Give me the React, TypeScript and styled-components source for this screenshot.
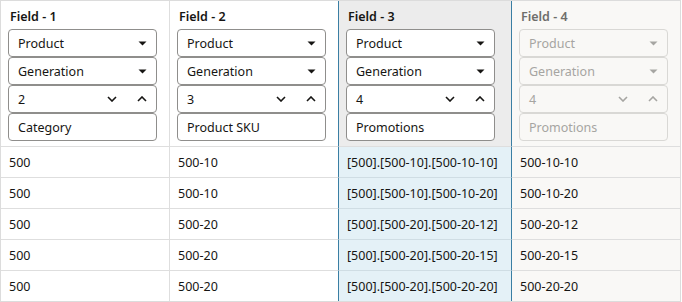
import styled, { createGlobalStyle } from "styled-components";

type Variant = "normal" | "selected" | "disabled";

interface ColumnValues {
    title: string
    hierarchy: string
    method: string
    depth: string
    name: string
    variant: Variant
    values: string[]
}

const columns: ColumnValues[] = [
    { title: "Field - 1", hierarchy: "Product", method: "Generation", depth: "2", name: "Category", variant: "normal", values: ["500", "500", "500", "500", "500"] },
    { title: "Field - 2", hierarchy: "Product", method: "Generation", depth: "3", name: "Product SKU", variant: "normal", values: ["500-10", "500-10", "500-20", "500-20", "500-20"] },
    { title: "Field - 3", hierarchy: "Product", method: "Generation", depth: "4", name: "Promotions", variant: "selected", values: ["[500].[500-10].[500-10-10]", "[500].[500-10].[500-10-20]", "[500].[500-20].[500-20-12]", "[500].[500-20].[500-20-15]", "[500].[500-20].[500-20-20]"] },
    { title: "Field - 4", hierarchy: "Product", method: "Generation", depth: "4", name: "Promotions", variant: "disabled", values: ["500-10-10", "500-10-20", "500-20-12", "500-20-15", "500-20-20"] },
]

const GlobalStyle = createGlobalStyle`
    html, body {
        margin: 0;
        padding: 0;
        background: #ffffff;
    }
    body {
        font-family: "Noto Sans", "Open Sans", sans-serif;
        color: #161513;
    }
`

function Caret() {
    return (
        <svg width="9" height="5" viewBox="0 0 9 5">
            <path d="M0.5 0.5 L8.5 0.5 L4.5 4.5 Z" fill="currentColor" />
        </svg>
    )
}

function Chevron({ up }: { up?: boolean }) {
    return (
        <svg width="10" height="6" viewBox="0 0 10 6">
            <path d={up ? "M1 5 L5 1 L9 5" : "M1 1 L5 5 L9 1"} fill="none" stroke="currentColor" strokeWidth="1.6" />
        </svg>
    )
}

export default function App() {
    return (
        <>
            <GlobalStyle />
            <Table>
                {columns.map((column, index) => (
                    <HeaderCell key={column.title} $variant={column.variant} $last={index === columns.length - 1} $blueRight={index === 1 || index === 2}>
                        <Title $variant={column.variant}>{column.title}</Title>
                        <Control $variant={column.variant}>
                            <span>{column.hierarchy}</span>
                            <Icons><Caret /></Icons>
                        </Control>
                        <Control $variant={column.variant}>
                            <span>{column.method}</span>
                            <Icons><Caret /></Icons>
                        </Control>
                        <Control $variant={column.variant}>
                            <span>{column.depth}</span>
                            <Icons>
                                <Chevron />
                                <Chevron up />
                            </Icons>
                        </Control>
                        <Control $variant={column.variant}>
                            <span>{column.name}</span>
                        </Control>
                    </HeaderCell>
                ))}
                {[0, 1, 2, 3, 4].map(row =>
                    columns.map((column, index) => (
                        <Cell
                            key={`${row}-${index}`}
                            $variant={column.variant}
                            $last={index === columns.length - 1}
                            $lastRow={row === 4}
                            $blueRight={index === 1 || index === 2}
                        >
                            {column.values[row]}
                        </Cell>
                    ))
                )}
            </Table>
        </>
    )
}

const Table = styled.div`
    width: 681px;
    box-sizing: border-box;
    border: 1px solid #dcdcdc;
    display: grid;
    grid-template-columns: 169px 169px 173px 168px;
    grid-template-rows: 146px repeat(4, 31px) 30px;
`

interface CellProps {
    $variant: Variant
    $last?: boolean
    $lastRow?: boolean
    $blueRight?: boolean
}

const HeaderCell = styled.div<CellProps>`
    box-sizing: border-box;
    padding: 6px 0 0 7px;
    display: flex;
    flex-direction: column;
    border-bottom: 1px solid #dedede;
    border-right: ${p => p.$last ? "none" : `1px solid ${p.$blueRight ? "#3a7ea3" : "#dedede"}`};
    background: ${p => p.$variant === "selected" ? "#ececec" : p.$variant === "disabled" ? "#f9f8f6" : "#ffffff"};
`

const Title = styled.div<{ $variant: Variant }>`
    height: 22px;
    line-height: 20px;
    padding-left: 2px;
    font-size: 12.5px;
    font-weight: 600;
    color: ${p => p.$variant === "disabled" ? "#6f6e6b" : "#161513"};
`

const Control = styled.div<{ $variant: Variant }>`
    box-sizing: border-box;
    width: 149px;
    height: 28px;
    padding: 0 9px 0 9px;
    border: 1px solid ${p => p.$variant === "disabled" ? "#d9d8d5" : "#8f8e8c"};
    border-radius: 4px;
    background: ${p => p.$variant === "disabled" ? "transparent" : "#ffffff"};
    display: flex;
    align-items: center;
    justify-content: space-between;
    font-size: 12.5px;
    color: ${p => p.$variant === "disabled" ? "#a6a5a2" : "#161513"};
`

const Icons = styled.div`
    display: flex;
    align-items: center;
    gap: 20px;
    & svg {
        display: block;
    }
`

const Cell = styled.div<CellProps>`
    box-sizing: border-box;
    padding-left: 8px;
    display: flex;
    align-items: center;
    font-size: 12.5px;
    border-bottom: ${p => p.$lastRow ? "none" : `1px solid ${p.$variant === "selected" ? "#cfdde4" : "#dedede"}`};
    border-right: ${p => p.$last ? "none" : `1px solid ${p.$blueRight ? "#3a7ea3" : "#dedede"}`};
    background: ${p => p.$variant === "selected" ? "#e4f1f7" : p.$variant === "disabled" ? "#f9f8f6" : "#ffffff"};
`
